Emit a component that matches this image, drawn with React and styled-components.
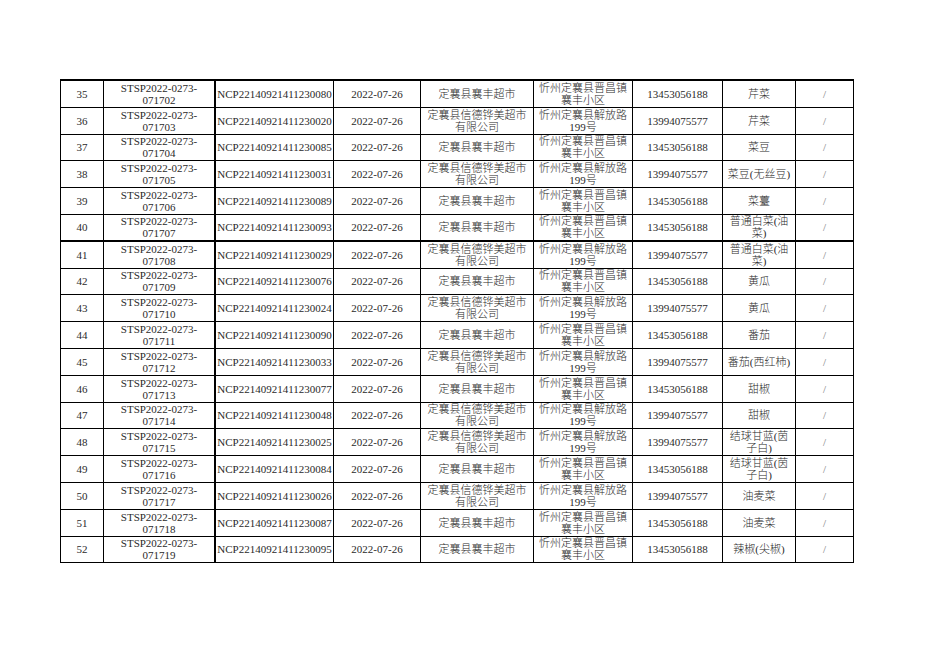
import React from "react";
import styled, {createGlobalStyle} from "styled-components";

const GlobalStyle = createGlobalStyle`
    body {
        margin: 0;
        background: #fff;
    }
`;

const Page = styled.div`
    padding: 79px 0 0 60px;
`;

const Sheet = styled.div`
    display: grid;
    grid-template-columns: 43px 112px 118px 87px 113px 99px 90px 73px 58px;
    grid-auto-rows: 26.8px;
    width: max-content;
    border-top: 2px solid #000;
    border-left: 1px solid #000;
    font-family: "Liberation Serif", "Noto Sans CJK SC", serif;
    font-size: 11px;
    font-weight: 300;
    color: #2a2a2a;
`;

const Cell = styled.div`
    box-sizing: border-box;
    display: flex;
    flex-direction: column;
    align-items: center;
    justify-content: center;
    text-align: center;
    line-height: 12px;
    white-space: nowrap;
    overflow: hidden;
    border-right: ${props => props.$thickRight ? '2px' : '1px'} solid #000;
    border-bottom: ${props => props.$thickBottom ? '2px' : '1px'} solid #000;
    color: ${props => props.$muted ? '#777' : 'inherit'};
`;

const XF = ["定襄县襄丰超市"];
const XD = ["定襄县信德铧美超市", "有限公司"];
const JC = ["忻州定襄县晋昌镇", "襄丰小区"];
const JF = ["忻州定襄县解放路", "199号"];
const P1 = "13453056188";
const P2 = "13994075577";

const rows = [
    [35, "071702", "080", "a", ["芹菜"]],
    [36, "071703", "020", "b", ["芹菜"]],
    [37, "071704", "085", "a", ["菜豆"]],
    [38, "071705", "031", "b", ["菜豆(无丝豆)"]],
    [39, "071706", "089", "a", ["菜薹"]],
    [40, "071707", "093", "a", ["普通白菜(油", "菜)"]],
    [41, "071708", "029", "b", ["普通白菜(油", "菜)"]],
    [42, "071709", "076", "a", ["黄瓜"]],
    [43, "071710", "024", "b", ["黄瓜"]],
    [44, "071711", "090", "a", ["番茄"]],
    [45, "071712", "033", "b", ["番茄(西红柿)"]],
    [46, "071713", "077", "a", ["甜椒"]],
    [47, "071714", "048", "b", ["甜椒"]],
    [48, "071715", "025", "b", ["结球甘蓝(茵", "子白)"]],
    [49, "071716", "084", "a", ["结球甘蓝(茵", "子白)"]],
    [50, "071717", "026", "b", ["油麦菜"]],
    [51, "071718", "087", "a", ["油麦菜"]],
    [52, "071719", "095", "a", ["辣椒(尖椒)"]],
];

const Lines = ({lines}) => lines.map((l, i) => <span key={i}>{l}</span>);

export default function App() {
    return (
        <Page>
            <GlobalStyle/>
            <Sheet>
                {rows.map(([no, code, ncp, shop, product]) => {
                    const cells = [
                        [String(no)],
                        ["STSP2022-0273-", code],
                        ["NCP22140921411230" + ncp],
                        ["2022-07-26"],
                        shop === "a" ? XF : XD,
                        shop === "a" ? JC : JF,
                        [shop === "a" ? P1 : P2],
                        product,
                        ["/"],
                    ];
                    return cells.map((c, i) => (
                        <Cell
                            key={no + "-" + i}
                            $thickRight={i === 1}
                            $thickBottom={no === 40}
                            $muted={i === 8}
                        >
                            <Lines lines={c}/>
                        </Cell>
                    ));
                })}
            </Sheet>
        </Page>
    );
}
